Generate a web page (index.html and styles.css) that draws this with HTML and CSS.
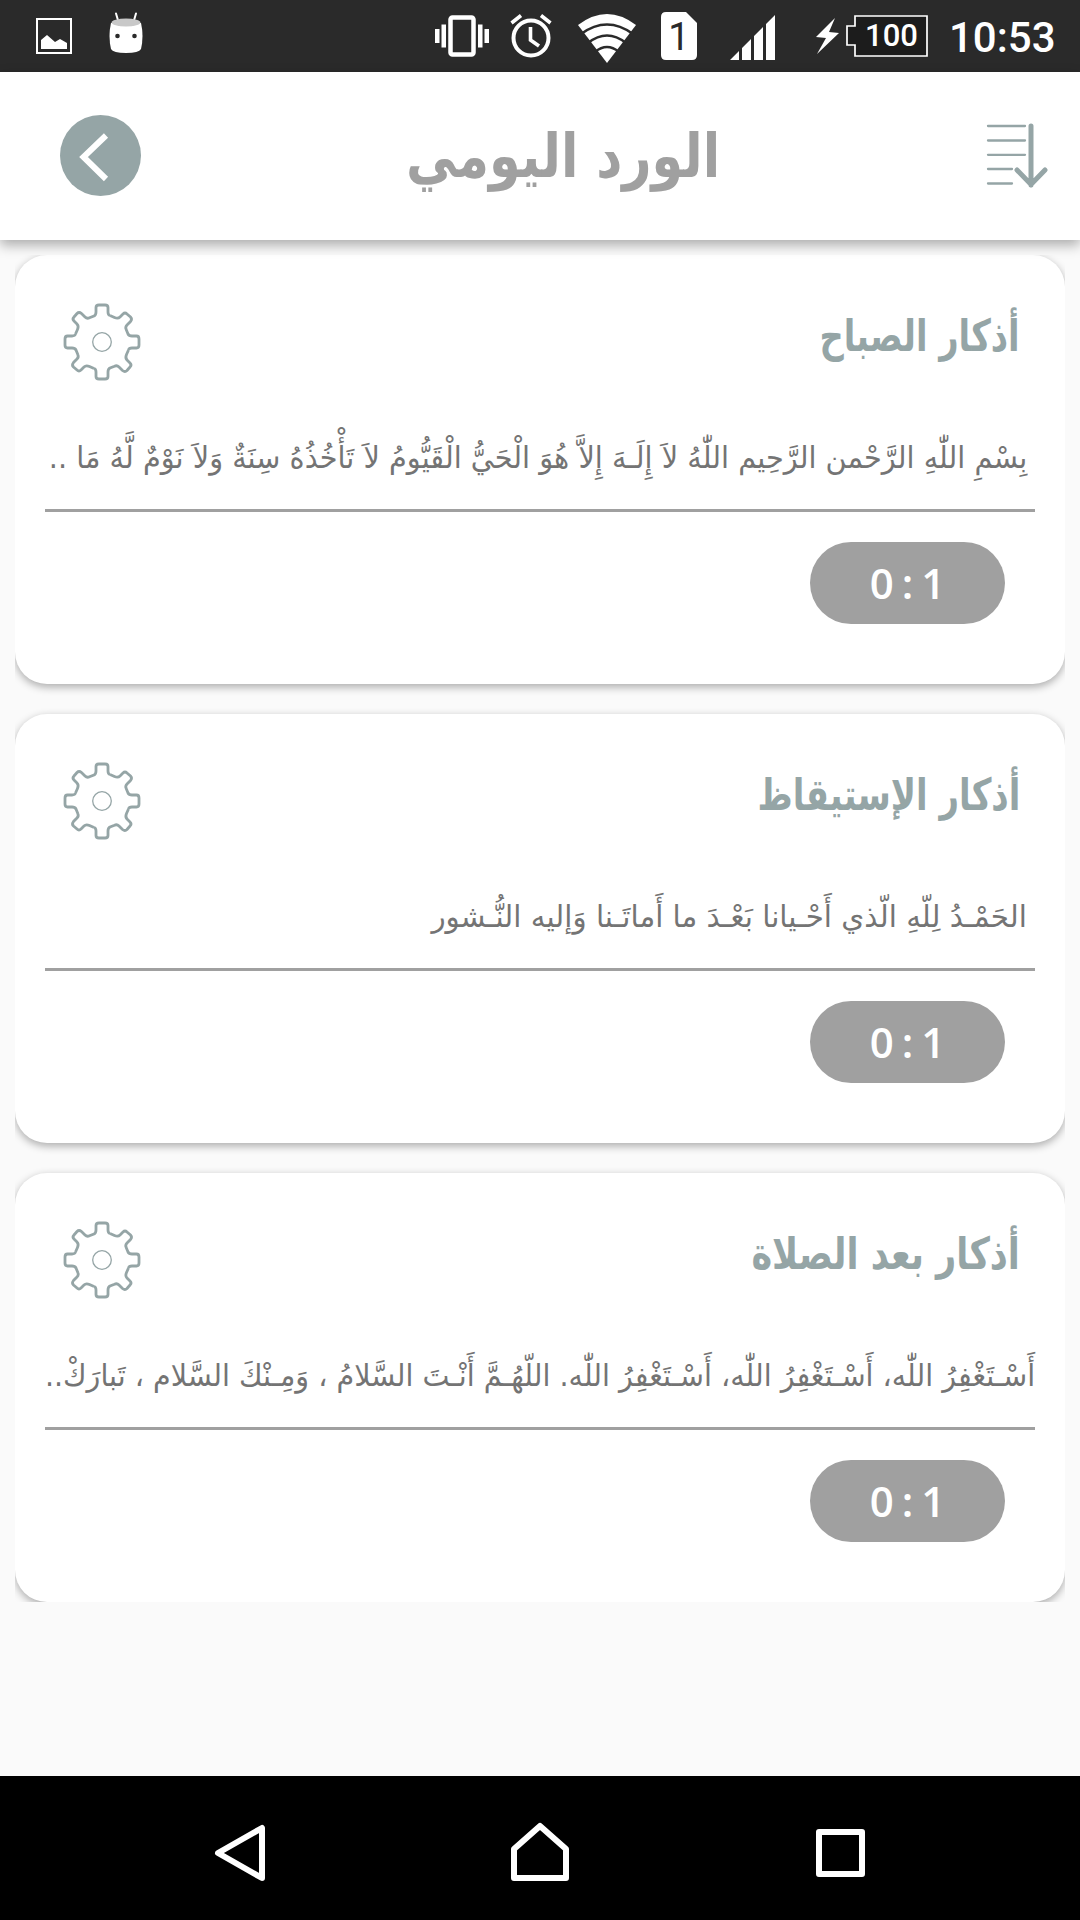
FILE: index.html
```
<!DOCTYPE html>
<html lang="ar">
<head>
    <meta charset="UTF-8">
    <meta name="viewport" content="width=device-width, initial-scale=1.0">
    <title>الورد اليومي</title>
    <link rel="stylesheet" href="styles.css">
</head>
<body>
<!-- shared gear icon -->
<svg class="defs" width="0" height="0">
    <defs>
        <path id="tooth" d="M-26.5-8L-24.5-12.5Q-23-16-25-18L-28-21Q-30-23-28-25L-25-28.500Q-23-30.500-20.500-28.500L-17-25Q-15-23-12.500-24.200L-8-26Q-6-27-6-30V-34.500Q-6-37-3-37H3Q6-37 6-34.500V-30Q6-27 8-26.500"/>
        <symbol id="gear" viewBox="-39 -39 78 78">
            <g fill="none" stroke="#95a5a6" stroke-width="2.8">
                <use href="#tooth"/>
                <use href="#tooth" transform="rotate(90)"/>
                <use href="#tooth" transform="rotate(180)"/>
                <use href="#tooth" transform="rotate(270)"/>
                <circle r="9.300" stroke-width="1.300"/>
            </g>
        </symbol>
    </defs>
</svg>
<div class="screen">
    <div class="status-bar">
        <div class="notifications">
            <svg width="36" height="36" viewBox="0 0 36 36">
                <rect x="1" y="1" width="34" height="34" fill="none" stroke="#fff" stroke-width="2"/>
                <path d="M5 31V22L11 17L19 24L24 21L31 25V31Z" fill="#fff"/>
            </svg>
            <svg class="droid" width="34" height="42" viewBox="0 0 34 42">
                <path d="M7 1.500L9.500 10M27 1.500L24.500 10" stroke="#fff" stroke-width="2" stroke-linecap="round"/>
                <path d="M2 11H32Q35 24 32 37Q30 41 17 41Q4 41 2 37Q-1 24 2 11Z" fill="#fff"/>
                <ellipse cx="17" cy="10.500" rx="14.500" ry="4" fill="#c8c8c8"/>
                <circle cx="8.500" cy="24" r="2.300" fill="#2a2a2a"/>
                <circle cx="25.500" cy="24" r="2.300" fill="#2a2a2a"/>
            </svg>
        </div>
        <div class="indicators">
            <svg width="54" height="42" viewBox="0 0 54 42">
                <rect x="15.500" y="2.500" width="23" height="37" rx="2" fill="none" stroke="#fff" stroke-width="4.500"/>
                <path d="M0 14H4.500V28H0ZM6.500 9.500H11V32.500H6.500ZM43 9.500H47.500V32.500H43ZM49.500 14H54V28H49.500Z" fill="#fff"/>
            </svg>
            <svg class="alarm" width="42" height="44" viewBox="0 0 42 44">
                <g fill="none" stroke="#fff" stroke-width="4">
                    <circle cx="21" cy="24" r="17.500"/>
                    <path d="M1.500 9L11 1.500M40.500 9L31 1.500M20.500 13V26L29 32" stroke-width="3.600"/>
                </g>
            </svg>
            <svg class="wifi" width="58" height="49" viewBox="0 0 58 49">
                <path d="M0 11Q29-11 58 11L29 49Z" fill="#fff"/>
                <path d="M3 20Q29 1 55 20M10 29Q29 14 48 29M17 38Q29 28 41 38" fill="none" stroke="#2a2a2a" stroke-width="2.600"/>
            </svg>
            <div class="sim">
                <svg width="36" height="48" viewBox="0 0 36 48"><path d="M5 0H25L36 11V43Q36 48 31 48H5Q0 48 0 43V5Q0 0 5 0Z" fill="#fff"/></svg>
                <span>1</span>
            </div>
            <svg class="signal" width="45" height="45" viewBox="0 0 45 45">
                <path d="M0 45L9 36V45ZM12 33L21 24V45H12ZM24 21L33 12V45H24ZM36 9L45 0V45H36Z" fill="#fff"/>
            </svg>
            <svg class="bolt" width="23" height="36" viewBox="0 0 23 36"><path d="M19 0L0 19L10 20L1 36L23 15L13 14Z" fill="#fff"/></svg>
            <div class="battery">
                <svg width="82" height="42" viewBox="0 0 82 42"><path d="M9 1H81V41H9V30H1V11H9Z" fill="#1c1c1c" stroke="#fff" stroke-width="1.700"/></svg>
                <span>100</span>
            </div>
            <span class="time">10:53</span>
        </div>
    </div>

    <header class="header">
        <svg width="81" height="81" viewBox="0 0 81 81">
            <circle cx="40.500" cy="40.500" r="40.500" fill="#95a5a6"/>
            <path d="M46 20.500L23.500 42L46 64" fill="none" stroke="#fff" stroke-width="6"/>
        </svg>
        <h1><span dir="rtl">الورد اليومي</span></h1>
        <svg class="sort" width="62" height="66" viewBox="0 0 62 66" fill="none" stroke="#95a5a6" stroke-linecap="round">
            <path d="M2 3H39M2 17.500H39M2 31.800H39M2 46H26M2 60.500H26" stroke-width="2.300"/>
            <path d="M45 3V62M31 47L45 61.500L59 47" stroke-width="5"/>
        </svg>
    </header>

    <main class="content">
        <div class="list">
            <section class="card">
                <div class="card-head">
                    <svg width="78" height="78"><use href="#gear"/></svg>
                    <h2 class="morning"><span dir="rtl">أذكار الصباح</span></h2>
                </div>
                <p class="zikr first" dir="rtl"><span>بِسْمِ اللّٰهِ الرَّحْمن الرَّحِيم اللّٰهُ لاَ إِلَـهَ إِلاَّ هُوَ الْحَيُّ الْقَيُّومُ لاَ تَأْخُذُهُ سِنَةٌ وَلاَ نَوْمٌ لَّهُ مَا ..</span></p>
                <div class="counter">0 : 1</div>
            </section>
            <section class="card">
                <div class="card-head">
                    <svg width="78" height="78"><use href="#gear"/></svg>
                    <h2 class="waking"><span dir="rtl">أذكار الإستيقاظ</span></h2>
                </div>
                <p class="zikr second" dir="rtl"><span>الحَمْـدُ لِلّهِ الّذي أَحْـيانا بَعْـدَ ما أَماتَـنا وَإليه النُّـشور</span></p>
                <div class="counter">0 : 1</div>
            </section>
            <section class="card">
                <div class="card-head">
                    <svg width="78" height="78"><use href="#gear"/></svg>
                    <h2 class="prayer"><span dir="rtl">أذكار بعد الصلاة</span></h2>
                </div>
                <p class="zikr third" dir="rtl"><span>أَسْـتَغْفِرُ اللّٰه، أَسْـتَغْفِرُ اللّٰه، أَسْـتَغْفِرُ اللّٰه. اللّهُـمَّ أَنْـتَ السَّلامُ ، وَمِـنْكَ السَّلام ، تَبارَكْ..</span></p>
                <div class="counter">0 : 1</div>
            </section>
        </div>
    </main>

    <nav class="nav-bar">
        <svg width="60" height="64" viewBox="0 0 60 64"><path d="M52 7V57L8 32Z"/></svg>
        <svg width="60" height="64" viewBox="0 0 60 64"><path d="M4 57V28L30 5L56 28V57Z"/></svg>
        <svg width="60" height="64" viewBox="0 0 60 64"><path d="M9 11H52V53H9Z"/></svg>
    </nav>
</div>
</body>
</html>
```
FILE: styles.css
```
* {
    box-sizing: border-box;
    margin: 0;
    padding: 0;
}
body {
    font-family: "DejaVu Sans", sans-serif;
    background-color: #fafafa;
}
svg {
    display: block;
    flex-shrink: 0;
}
.defs {
    position: absolute;
}
.screen {
    width: 1080px;
    height: 1920px;
    display: flex;
    flex-direction: column;
    overflow: hidden;
}

/* status bar */
.status-bar {
    height: 72px;
    flex-shrink: 0;
    padding: 0 25px 0 36px;
    display: flex;
    justify-content: space-between;
    background-color: #2a2a2a;
    color: #fff;
    font-family: Roboto, sans-serif;
    font-weight: 500;
}
.notifications, .indicators {
    display: flex;
    align-items: center;
}
.droid {
    margin: 0 0 6px 37px;
}
.alarm {
    margin-left: 21px;
}
.wifi {
    margin: 5px 0 0 26px;
}
.sim, .battery {
    position: relative;
}
.sim {
    margin-left: 25px;
}
.sim span {
    position: absolute;
    inset: 0;
    text-align: center;
    font-size: 38px;
    font-weight: 400;
    line-height: 51px;
    color: #2a2a2a;
}
.signal {
    margin: 3px 0 0 33px;
}
.bolt {
    margin-left: 41px;
}
.battery {
    margin-left: 7px;
}
.battery span {
    position: absolute;
    inset: 0 8px 0 17px;
    text-align: center;
    font-size: 31px;
    line-height: 41px;
}
.time {
    width: 106px;
    margin: 3px 0 0 21px;
    font-size: 42px;
    line-height: 50px;
    white-space: nowrap;
}

/* header */
.header {
    position: relative;
    z-index: 1;
    height: 168px;
    flex-shrink: 0;
    padding: 0 32px 2px 60px;
    display: flex;
    align-items: center;
    justify-content: space-between;
    background-color: #fff;
    box-shadow: 0 5px 12px rgba(0, 0, 0, 0.32);
}
h1 {
    padding-top: 2px;
    font-size: 61px;
    line-height: 80px;
    color: #a0a0a0;
}
h1 span, h2 span, .zikr span {
    display: inline-block;
    white-space: nowrap;
}
h1 span {
    transform: scaleX(0.835);
}
.sort {
    margin-top: 2px;
}

/* cards */
.content {
    flex: 1;
    padding: 15px;
}
.list {
    height: 1347px;
    display: flex;
    flex-direction: column;
    gap: 30px;
    overflow: hidden;
}
.card {
    height: 429px;
    flex-shrink: 0;
    padding: 0 30px;
    background-color: #fff;
    border-radius: 32px;
    box-shadow: 0 3px 8px rgba(0, 0, 0, 0.32);
}
.card-head {
    height: 164px;
    padding: 48px 15px 0 18px;
    display: flex;
    justify-content: space-between;
}
h2 {
    font-size: 44px;
    line-height: 65px;
    color: #95a5a6;
}
h2 span {
    transform-origin: right;
}
.morning span {
    transform: scaleX(0.765);
}
.waking span {
    transform: scaleX(0.77);
}
.prayer span {
    transform: scaleX(0.797);
}
.zikr {
    height: 93px;
    padding-right: 8px;
    border-bottom: 3px solid #a0a0a0;
    font-size: 30px;
    line-height: 78px;
    color: #747474;
}
.zikr span {
    transform-origin: right;
}
.first span {
    transform: scaleX(0.959);
}
.second span {
    transform: scaleX(0.978);
}
.third {
    padding-right: 0;
}
.third span {
    transform: scaleX(0.952);
}
.counter {
    width: 195px;
    height: 82px;
    margin: 30px 30px 0 auto;
    border-radius: 41px;
    background-color: #a0a0a0;
    color: #fff;
    font-family: "Open Sans", sans-serif;
    font-size: 42px;
    font-weight: 600;
    line-height: 81px;
    text-align: center;
    word-spacing: -3px;
}

/* navigation bar */
.nav-bar {
    height: 144px;
    flex-shrink: 0;
    padding: 10px 90px 0;
    display: grid;
    grid-template-columns: repeat(3, 1fr);
    place-items: center;
    background-color: #000;
}
.nav-bar path {
    fill: none;
    stroke: #fff;
    stroke-width: 6;
    stroke-linejoin: round;
}
```
